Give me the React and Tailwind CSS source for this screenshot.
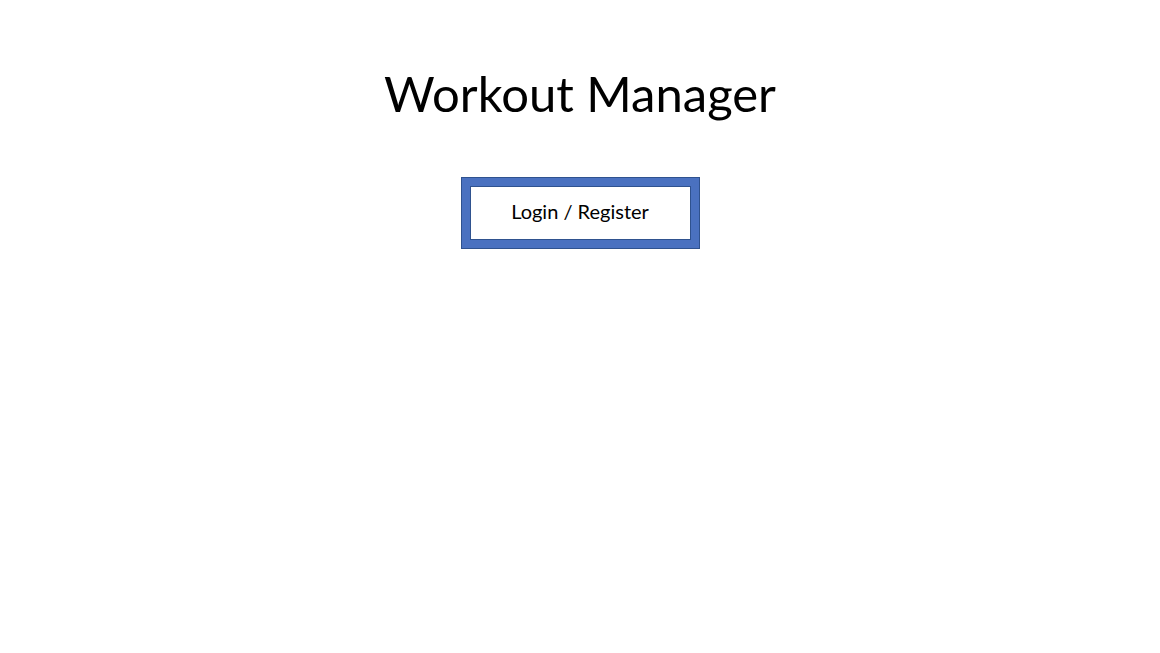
export default function App() {
  return (
    <div className="w-[1160px] h-[653px] bg-white flex flex-col items-center" style={{ fontFamily: "Lato, 'Open Sans', sans-serif" }}>
      <h1 className="mt-[65px] text-[49px] leading-[56px] text-black font-normal">Workout Manager</h1>
      <div className="mt-[56px] w-[239px] h-[72px] bg-[#4a71c0] border border-[#2f528f] p-[8px] flex">
        <div className="flex-1 bg-white border border-[#2f528f] flex items-center justify-center pb-[4px] text-[20px] text-black">
          Login / Register
        </div>
      </div>
    </div>
  );
}
